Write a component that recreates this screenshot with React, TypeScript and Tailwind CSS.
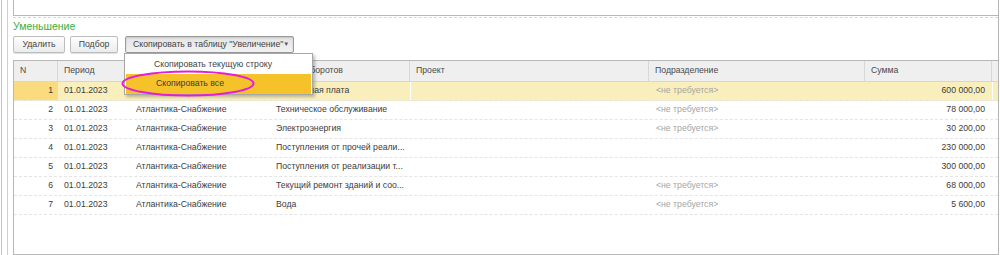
import React from "react";

const cols = [44, 71, 140, 141, 239, 216, 127, 120];

type Row = {
  n: number;
  date: string;
  ctr: string;
  art: string;
  proj: string;
  dep: string;
  sum: string;
};

const rows: Row[] = [
  { n: 1, date: "01.01.2023", ctr: "Атлантика-Снабжение", art: "Заработная плата", proj: "", dep: "<не требуется>", sum: "600 000,00" },
  { n: 2, date: "01.01.2023", ctr: "Атлантика-Снабжение", art: "Техническое обслуживание", proj: "", dep: "<не требуется>", sum: "78 000,00" },
  { n: 3, date: "01.01.2023", ctr: "Атлантика-Снабжение", art: "Электроэнергия", proj: "", dep: "<не требуется>", sum: "30 200,00" },
  { n: 4, date: "01.01.2023", ctr: "Атлантика-Снабжение", art: "Поступления от прочей реали...", proj: "", dep: "", sum: "230 000,00" },
  { n: 5, date: "01.01.2023", ctr: "Атлантика-Снабжение", art: "Поступления от реализации т...", proj: "", dep: "", sum: "300 000,00" },
  { n: 6, date: "01.01.2023", ctr: "Атлантика-Снабжение", art: "Текущий ремонт зданий и соо...", proj: "", dep: "<не требуется>", sum: "68 000,00" },
  { n: 7, date: "01.01.2023", ctr: "Атлантика-Снабжение", art: "Вода", proj: "", dep: "<не требуется>", sum: "5 600,00" },
];

function Btn({ children, w }: { children: React.ReactNode; w: string }) {
  return (
    <div
      className={`${w} h-[17px] flex items-center justify-center rounded-[2px] border border-[#bdbdbd] bg-gradient-to-b from-[#fdfdfd] to-[#ececec] text-[#444] shadow-[0_1px_0_#e0e0e0] whitespace-nowrap`}
    >
      {children}
    </div>
  );
}

export default function App() {
  const header = ["N", "Период", "Контрагент", "Статья оборотов", "Проект", "Подразделение", "Сумма", "Комментарий"];
  return (
    <div
      className="w-[1000px] h-[255px] bg-white flex overflow-hidden relative text-[8.7px] text-[#3c3c3c]"
      style={{ fontFamily: '"Liberation Sans", Arial, sans-serif' }}
    >
      {/* left frame lines */}
      <div className="w-[13px] h-full flex pl-[1px]">
        <div className="w-[6px] h-full border-l border-[#c4c4c4]" />
        <div className="w-[6px] h-full border-l border-[#d0d0d0]" />
      </div>

      {/* content */}
      <div className="w-[986px] h-full flex flex-col border-r border-[#b4b4b4]">
        <div className="h-[16px] border-l border-b border-[#b8b8b8]" />
        <div className="mt-[1px] h-0 border-t border-dashed border-[#d8d8d8]" />
        <div className="h-[18px] flex items-center text-[10.5px] text-[#3aae3a]">Уменьшение</div>

        {/* buttons */}
        <div className="h-[17px] flex">
          <Btn w="w-[52px]">Удалить</Btn>
          <div className="w-[5px]" />
          <Btn w="w-[48px]">Подбор</Btn>
          <div className="w-[7px]" />
          <div className="w-[169px] h-[17px] flex items-center rounded-[2px] border border-[#9a9a9a] bg-gradient-to-b from-[#e4e4e4] to-[#f2f2f2] text-[#444] shadow-[inset_0_1px_2px_rgba(0,0,0,0.15)] pl-[7px] pr-[4px] whitespace-nowrap">
            <span className="flex-1 whitespace-nowrap">Скопировать в таблицу "Увеличение"</span>
            <span className="text-[6px] text-[#555]">▼</span>
          </div>
        </div>

        {/* table */}
        <div className="mt-[7px] flex-1 border-l border-t border-b border-[#b8b8b8] overflow-hidden">
          <div className="flex h-[21px] bg-[#efefef] border-b border-[#d6d6d6] text-[#4a4a4a]">
            {header.map((h, i) => (
              <div
                key={i}
                style={{ width: cols[i] }}
                className="shrink-0 h-full flex items-center pl-[6px] border-r border-[#d8d8d8] whitespace-nowrap overflow-hidden"
              >
                {h}
              </div>
            ))}
          </div>
          {rows.map((r, idx) => {
            const sel = idx === 0;
            return (
              <div
                key={r.n}
                className={`flex h-[19px] border-b border-dashed border-[#e4e4e4] ${sel ? "bg-[#f9efbd]" : "bg-white"}`}
              >
                <div style={{ width: cols[0] }} className={`shrink-0 flex items-center justify-end pr-[5px] ${sel ? "bg-[#fbdb80]" : ""}`}>
                  {r.n}
                </div>
                <div style={{ width: cols[1] }} className="shrink-0 flex items-center pl-[6px]">{r.date}</div>
                <div style={{ width: cols[2] }} className="shrink-0 flex items-center pl-[7px] whitespace-nowrap">{r.ctr}</div>
                <div style={{ width: cols[3] }} className="shrink-0 flex items-center pl-[7px] whitespace-nowrap overflow-hidden">{r.art}</div>
                <div style={{ width: cols[4] }} className={`shrink-0 flex items-center pl-[7px] ${sel ? "border-l border-white" : ""}`}>{r.proj}</div>
                <div style={{ width: cols[5] }} className="shrink-0 flex items-center pl-[7px] text-[#a5a5a5]">{r.dep}</div>
                <div style={{ width: cols[6] }} className="shrink-0 flex items-center justify-end pr-[7px]">{r.sum}</div>
                <div style={{ width: cols[7] }} className={`shrink-0 ${sel ? "border-l border-white" : ""}`} />
              </div>
            );
          })}
        </div>
      </div>

      {/* dropdown menu overlay */}
      <div className="absolute left-[124px] top-[53px] w-[189px] h-[42px] bg-white border border-[#a8a8a8] shadow-[2px_2px_3px_rgba(0,0,0,0.25)] flex flex-col pt-[1px] px-[1px]">
        <div className="h-[19px] flex items-center pl-[28px] text-[#444] whitespace-nowrap">Скопировать текущую строку</div>
        <div className="h-[20px] flex items-center pl-[30px] bg-[#f6c229] text-[#3c3c3c] whitespace-nowrap">Скопировать все</div>
      </div>
      <svg className="absolute left-[120px] top-[69px]" width="136" height="29" viewBox="0 0 136 29">
        <ellipse cx="68" cy="14.5" rx="65.5" ry="12" fill="none" stroke="#e21fd8" strokeWidth="2" />
      </svg>
    </div>
  );
}
